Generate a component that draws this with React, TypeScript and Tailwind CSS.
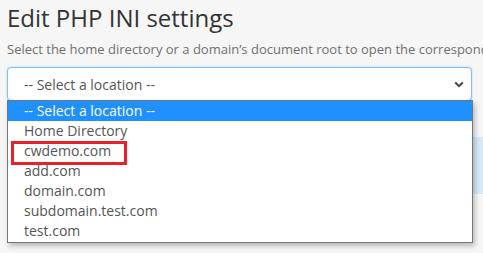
import React from "react";

const items = ["Home Directory", "cwdemo.com", "add.com", "domain.com", "subdomain.test.com", "test.com"];

export default function App() {
  return (
    <div className="w-[483px] h-[253px] overflow-hidden bg-[#f6f6f6] text-[#333] font-['Open_Sans',sans-serif]">
      <div className="pl-[7px] pr-[12px] pt-[1px]">
        <h1 className="text-[24px] leading-[34px] text-[#333]">Edit PHP INI settings</h1>
        <p className="mt-[4px] text-[13px] leading-[20px] text-[#707070] whitespace-nowrap">
          Select the home directory or a domain’s document root to open the corresponding PHP INI file.
        </p>
        <div className="relative mt-[8px] w-[465px]">
          <div className="h-[34px] flex items-center justify-between pl-[16px] pr-[7px] bg-white border border-[#80bdff] rounded-[4px] shadow-[0_0_2px_rgba(102,175,233,0.5)] text-[14px] text-[#555]">
            <span>-- Select a location --</span>
            <svg width="10" height="7" viewBox="0 0 10 7" className="mt-[1px]">
              <path d="M1.2 1.5 L5 5.2 L8.8 1.5" fill="none" stroke="#444" strokeWidth="2" />
            </svg>
          </div>
          <div className="mt-[36px] h-[57px] w-[476px] bg-[#d6e9f6]" />
          <div className="absolute left-0 top-[33px] w-[466px] bg-white border border-[#767676] shadow-[2px_3px_5px_rgba(0,0,0,0.25)] text-[14px] leading-[20px] py-0">
            <div className="bg-[#1e90ff] text-white pl-[16px] h-[20px]">-- Select a location --</div>
            {items.map((it) => (
              <div key={it} className="pl-[16px] h-[20px] text-[#555]">
                {it}
              </div>
            ))}
            <div className="h-[1px]" />
          </div>
          <div className="absolute left-[4px] top-[74px] w-[116px] h-[24px] border-[3px] border-[#e8202a]" />
        </div>
      </div>
    </div>
  );
}
